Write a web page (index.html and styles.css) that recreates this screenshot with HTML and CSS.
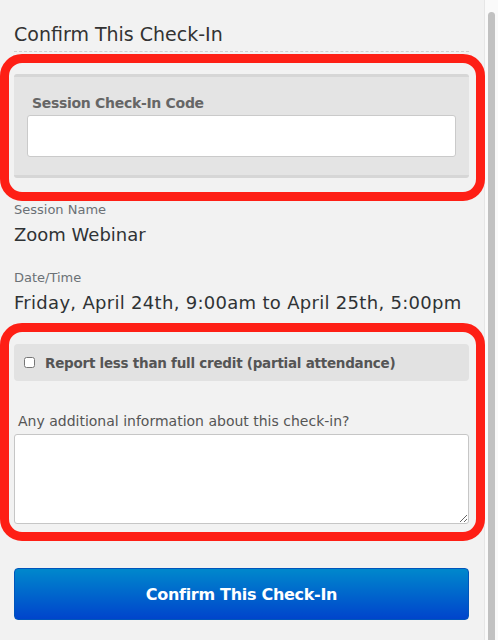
FILE: index.html
```html
<!DOCTYPE html>
<html>
<head>
<meta charset="utf-8">
<link rel="stylesheet" href="styles.css">
</head>
<body>
<div class="page">
  <main class="content">
    <h2 class="title">Confirm This Check-In</h2>
    <div class="code-panel">
      <label class="code-label" for="code">Session Check-In Code</label>
      <input class="code-input" id="code" type="text">
    </div>
    <div class="field">
      <div class="field-label">Session Name</div>
      <div class="field-value">Zoom Webinar</div>
    </div>
    <div class="field">
      <div class="field-label">Date/Time</div>
      <div class="field-value field-value-date">Friday, April 24th, 9:00am to April 25th, 5:00pm</div>
    </div>
    <label class="partial">
      <input type="checkbox" class="partial-box">
      <span>Report less than full credit (partial attendance)</span>
    </label>
    <div class="notes">
      <label class="notes-label" for="notes">Any additional information about this check-in?</label>
      <textarea class="notes-input" id="notes"></textarea>
    </div>
    <button class="confirm-btn" type="button">Confirm This Check-In</button>
    <div class="highlight highlight-code"></div>
    <div class="highlight highlight-partial"></div>
  </main>
  <div class="scrollbar"><div class="scrollbar-thumb"></div></div>
</div>
</body>
</html>
```
FILE: styles.css
```css
html, body {
  margin: 0;
  padding: 0;
  height: 100%;
  overflow: hidden;
}
body {
  background: #f2f2f2;
  font-family: "DejaVu Sans", "Liberation Sans", sans-serif;
  color: #333;
}
.page {
  display: flex;
  height: 640px;
}
.content {
  position: relative;
  width: 455px;
  padding: 0 15px 0 14px;
  border-right: 1px solid #e6e6e6;
  display: flex;
  flex-direction: column;
}
.title {
  margin: 0;
  padding-top: 22px;
  font-size: 19px;
  font-weight: normal;
  line-height: 24px;
  color: #333;
  padding-bottom: 5px;
  border-bottom: 1px dashed #cfcfcf;
}
.code-panel {
  margin-top: 22px;
  background: #e4e4e4;
  border-top: 3px solid #d6d6d6;
  border-bottom: 3px solid #d6d6d6;
  border-radius: 3px;
  padding: 17px 13px 18px;
  display: flex;
  flex-direction: column;
}
.code-label {
  font-size: 14px;
  font-weight: bold;
  letter-spacing: -0.3px;
  color: #666;
  line-height: 18px;
  padding-left: 5px;
  margin-bottom: 3px;
}
.code-input {
  height: 42px;
  box-sizing: border-box;
  border: 1px solid #cacaca;
  border-radius: 3px;
  background: #fff;
  margin: 0;
}
.field {
  margin-top: 24px;
}
.field + .field {
  margin-top: 24px;
}
.field-label {
  font-size: 13px;
  line-height: 16px;
  color: #6b7176;
}
.field-value {
  margin-top: 6px;
  font-size: 18px;
  line-height: 22px;
  color: #2f3335;
}
.field-value-date {
  letter-spacing: 0.3px;
}
.partial {
  margin-top: 30px;
  height: 37px;
  background: #e2e2e2;
  border-radius: 4px;
  display: flex;
  align-items: center;
  padding-left: 10px;
  font-size: 13.5px;
  letter-spacing: -0.25px;
  font-weight: bold;
  color: #555;
}
.partial-box {
  width: 11px;
  height: 11px;
  margin: 0 10px 0 0;
}
.notes {
  margin-top: 30px;
  display: flex;
  flex-direction: column;
}
.notes-label {
  font-size: 14px;
  line-height: 20px;
  color: #555;
  padding-left: 4px;
  margin-bottom: 3px;
}
.notes-input {
  height: 90px;
  box-sizing: border-box;
  border: 1px solid #c6c6c6;
  border-radius: 3px;
  background: #fff;
  margin: 0;
}
.confirm-btn {
  margin-top: 44px;
  height: 52px;
  border: 1px solid #0055bb;
  border-radius: 4px;
  background: linear-gradient(#0088cc, #0044cc);
  color: #fff;
  font-family: "DejaVu Sans", "Liberation Sans", sans-serif;
  font-size: 16px;
  letter-spacing: -0.3px;
  font-weight: bold;
}
.highlight {
  position: absolute;
  left: 0;
  width: 485px;
  box-sizing: border-box;
  border: 9px solid #fe1f15;
  border-radius: 22px;
  pointer-events: none;
}
.highlight-code {
  top: 54px;
  height: 147px;
}
.highlight-partial {
  top: 323px;
  height: 218px;
}
.scrollbar {
  flex: 1;
  background: #fafafa;
  padding: 12px 3px 0 3px;
}
.scrollbar-thumb {
  width: 7px;
  height: 100%;
  background: #c1c1c1;
  border-radius: 4px 4px 0 0;
}
```
